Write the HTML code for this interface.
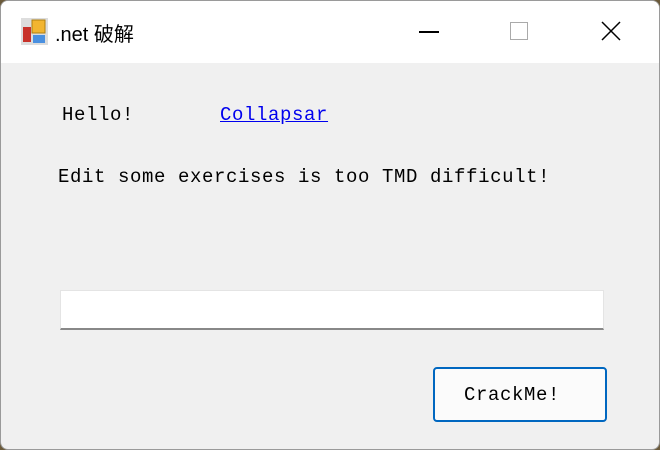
<!DOCTYPE html>
<html><head><meta charset="utf-8"><style>
html,body{margin:0;padding:0;width:660px;height:450px;overflow:hidden;background:#6b5a3a;}
.win{position:absolute;left:0;top:0;width:658px;height:448px;border:1px solid #9a9a9a;border-radius:8px;background:#f0f0f0;overflow:hidden;}
.title{position:absolute;left:0;top:0;width:100%;height:62px;background:#fff;}
.tt{position:absolute;left:54px;top:17px;font:20px "Liberation Sans","Noto Sans CJK SC",sans-serif;color:#000;}
.m{position:absolute;font:19px "Liberation Mono",monospace;letter-spacing:0.6px;color:#000;white-space:pre;line-height:22px;}
a{color:#0000ee;text-decoration:underline;}
.tb{position:absolute;left:59px;top:289px;width:542px;height:37px;background:#fff;border:1px solid #e4e4e4;border-bottom:2px solid #888;}
.btn{position:absolute;left:432px;top:366px;width:170px;height:51px;background:#fbfbfb;border:2px solid #0067c0;border-radius:4px;}
</style></head><body>
<div class="win">
<div class="title">
<svg style="position:absolute;left:20px;top:17px" width="27" height="27" viewBox="0 0 27 27">
<rect x="0" y="0" width="27" height="27" fill="#ddd"/>
<rect x="11" y="2" width="13" height="13" fill="#f2b531" stroke="#b07f10"/>
<rect x="2" y="9" width="8" height="15" fill="#c8322a"/>
<rect x="12" y="17" width="12" height="8" fill="#4a90e0"/>
</svg>
<div class="tt">.net 破解</div>
<div style="position:absolute;left:418px;top:30px;width:20px;height:1.5px;background:#000"></div>
<div style="position:absolute;left:509px;top:21px;width:16px;height:16px;border:1px solid #aaa"></div>
<svg style="position:absolute;left:600px;top:20px" width="20" height="20" viewBox="0 0 20 20"><path d="M1 1L19 19M19 1L1 19" stroke="#000" stroke-width="1.5"/></svg>
</div>
<div class="m" style="left:61px;top:103px">Hello!</div>
<div class="m" style="left:219px;top:103px"><a>Collapsar</a></div>
<div class="m" style="left:57px;top:165px">Edit some exercises is too TMD difficult!</div>
<div class="tb"></div>
<div class="btn"><div class="m" style="left:29px;top:15px">CrackMe!</div></div>
</div>
</body></html>
